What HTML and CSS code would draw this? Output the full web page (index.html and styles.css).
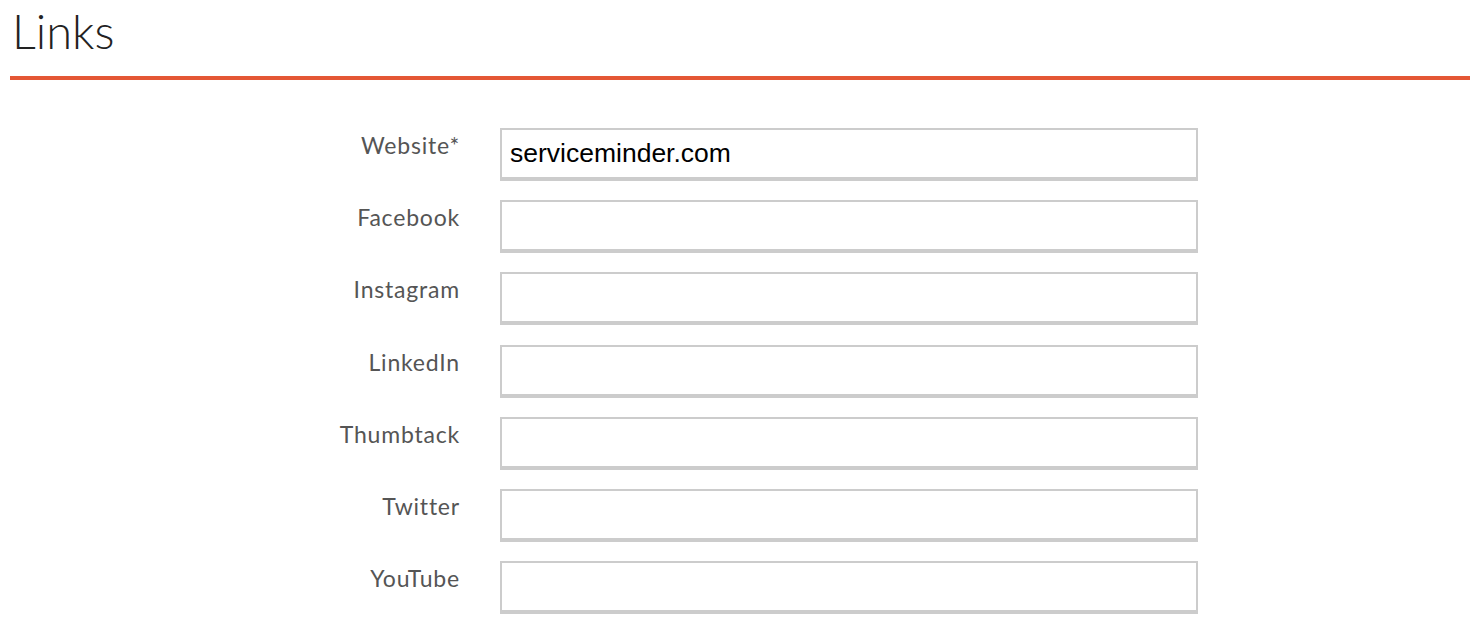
FILE: index.html
```html
<!DOCTYPE html>
<html>
<head>
<meta charset="utf-8">
<link rel="stylesheet" href="styles.css">
</head>
<body>
<div class="page">
  <h1 class="title">Links</h1>
  <form class="form">
    <div class="row"><label class="label">Website*</label><input class="field" type="text" value="serviceminder.com"></div>
    <div class="row"><label class="label">Facebook</label><input class="field" type="text"></div>
    <div class="row"><label class="label">Instagram</label><input class="field" type="text"></div>
    <div class="row"><label class="label">LinkedIn</label><input class="field" type="text"></div>
    <div class="row"><label class="label">Thumbtack</label><input class="field" type="text"></div>
    <div class="row"><label class="label">Twitter</label><input class="field" type="text"></div>
    <div class="row"><label class="label">YouTube</label><input class="field" type="text"></div>
  </form>
</div>
</body>
</html>
```

FILE: styles.css
```css
html, body {
  margin: 0;
  padding: 0;
  background: #fff;
}
.page {
  padding-left: 10px;
}
.title {
  margin: 0;
  padding-top: 3px;
  padding-left: 2px;
  height: 80px;
  box-sizing: border-box;
  font-family: "Lato", "Liberation Sans", sans-serif;
  font-weight: 300;
  font-size: 47px;
  line-height: 56px;
  color: #222;
  border-bottom: 4px solid #e45735;
}
.form {
  display: flex;
  flex-direction: column;
  gap: 19.2px;
  padding-top: 48px;
}
.row {
  display: flex;
  gap: 40px;
  height: 53px;
}
.label {
  width: 450px;
  text-align: right;
  font-family: "Lato", "Liberation Sans", sans-serif;
  font-size: 23px;
  letter-spacing: 0.8px;
  line-height: 26px;
  color: #555;
  padding-top: 4px;
  box-sizing: border-box;
}
.field {
  width: 698px;
  height: 53px;
  box-sizing: border-box;
  margin: 0;
  border: 2px solid #cccccc;
  border-bottom-width: 4px;
  padding: 0 8px;
  font-family: "Liberation Sans", Arial, sans-serif;
  font-size: 26.5px;
  color: #000;
  background: #fff;
  outline: none;
}
```
